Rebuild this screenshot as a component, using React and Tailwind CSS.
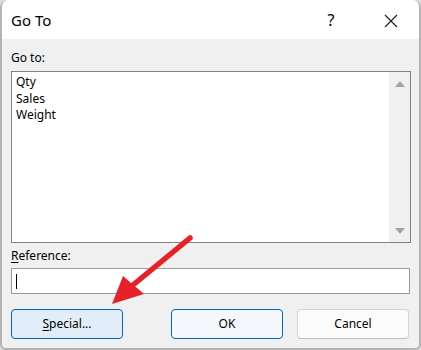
import React from "react";

const font = { fontFamily: '"Segoe UI","Noto Sans",sans-serif' };

export default function App() {
  return (
    <div className="w-[421px] h-[350px] bg-[#dcdcdc] relative overflow-hidden" style={font}>
      <div className="w-[421px] h-[350px] flex flex-col border-x-2 border-b-2 border-[#b4b4b4] rounded-t-[8px] rounded-b-[6px] overflow-hidden bg-[#f0f0f0]">
        {/* Title bar */}
        <div className="h-[39px] shrink-0 bg-white flex items-start pt-[10px] pl-[9px] text-[15px] leading-[20px] text-black">
          <span className="flex-1">Go To</span>
          <span className="w-[14px] text-center mr-[46px] text-[16px]">?</span>
          <svg width="14" height="14" viewBox="0 0 14 14" className="mt-[4px] mr-[21px]">
            <path d="M1 1 L13 13 M13 1 L1 13" stroke="#1a1a1a" strokeWidth="1.1" />
          </svg>
        </div>

        {/* Body */}
        <div className="flex-1 flex flex-col pl-[9px] pt-[11px] text-[12px] leading-[16px] text-black">
          <div>Go to:</div>
          <div className="mt-[5px] w-[400px] h-[172px] border border-[#828282] bg-white flex">
            <div className="flex-1 pl-[4px] pt-[2px] leading-[16.5px]">
              <div>Qty</div>
              <div>Sales</div>
              <div>Weight</div>
            </div>
            <div className="w-[21px] bg-[#f0f0f0] flex flex-col items-center justify-between pt-[9px] pb-[8px]">
              <svg width="10" height="6" viewBox="0 0 10 6">
                <path d="M5 0 L10 6 L0 6 Z" fill="#a3a3a3" />
              </svg>
              <svg width="10" height="6" viewBox="0 0 10 6">
                <path d="M0 0 L10 0 L5 6 Z" fill="#a3a3a3" />
              </svg>
            </div>
          </div>

          <div className="mt-[5px]">
            <span className="underline underline-offset-2">R</span>eference:
          </div>
          <div className="mt-[4px] w-[399px] h-[26px] border border-[#9a9a9a] bg-white flex items-center pl-[4px]">
            <div className="w-[1px] h-[15px] bg-black" />
          </div>

          <div className="mt-[15px] flex pr-[10px]">
            <div className="w-[112px] h-[30px] rounded-[4px] border-[1.5px] border-[#0067c0] bg-[#e1eefa] flex items-center justify-center">
              <span>
                <span className="underline underline-offset-2">S</span>pecial...
              </span>
            </div>
            <div className="flex-1" />
            <div className="w-[112px] h-[30px] rounded-[4px] border-[1.5px] border-[#0067c0] bg-[#f4f8fc] flex items-center justify-center">
              OK
            </div>
            <div className="w-[112px] h-[30px] ml-[14px] rounded-[4px] border border-[#d3d3d3] border-b-[#bdbdbd] bg-[#fbfbfb] flex items-center justify-center">
              Cancel
            </div>
          </div>
        </div>
      </div>

      {/* Red annotation arrow */}
      <svg className="absolute left-0 top-0 pointer-events-none" width="421" height="350" viewBox="0 0 421 350">
        <line x1="190" y1="238" x2="133" y2="285" stroke="#e8202a" strokeWidth="5.5" strokeLinecap="round" />
        <polygon points="112,304 123,276 144,294" fill="#e8202a" />
      </svg>
    </div>
  );
}
